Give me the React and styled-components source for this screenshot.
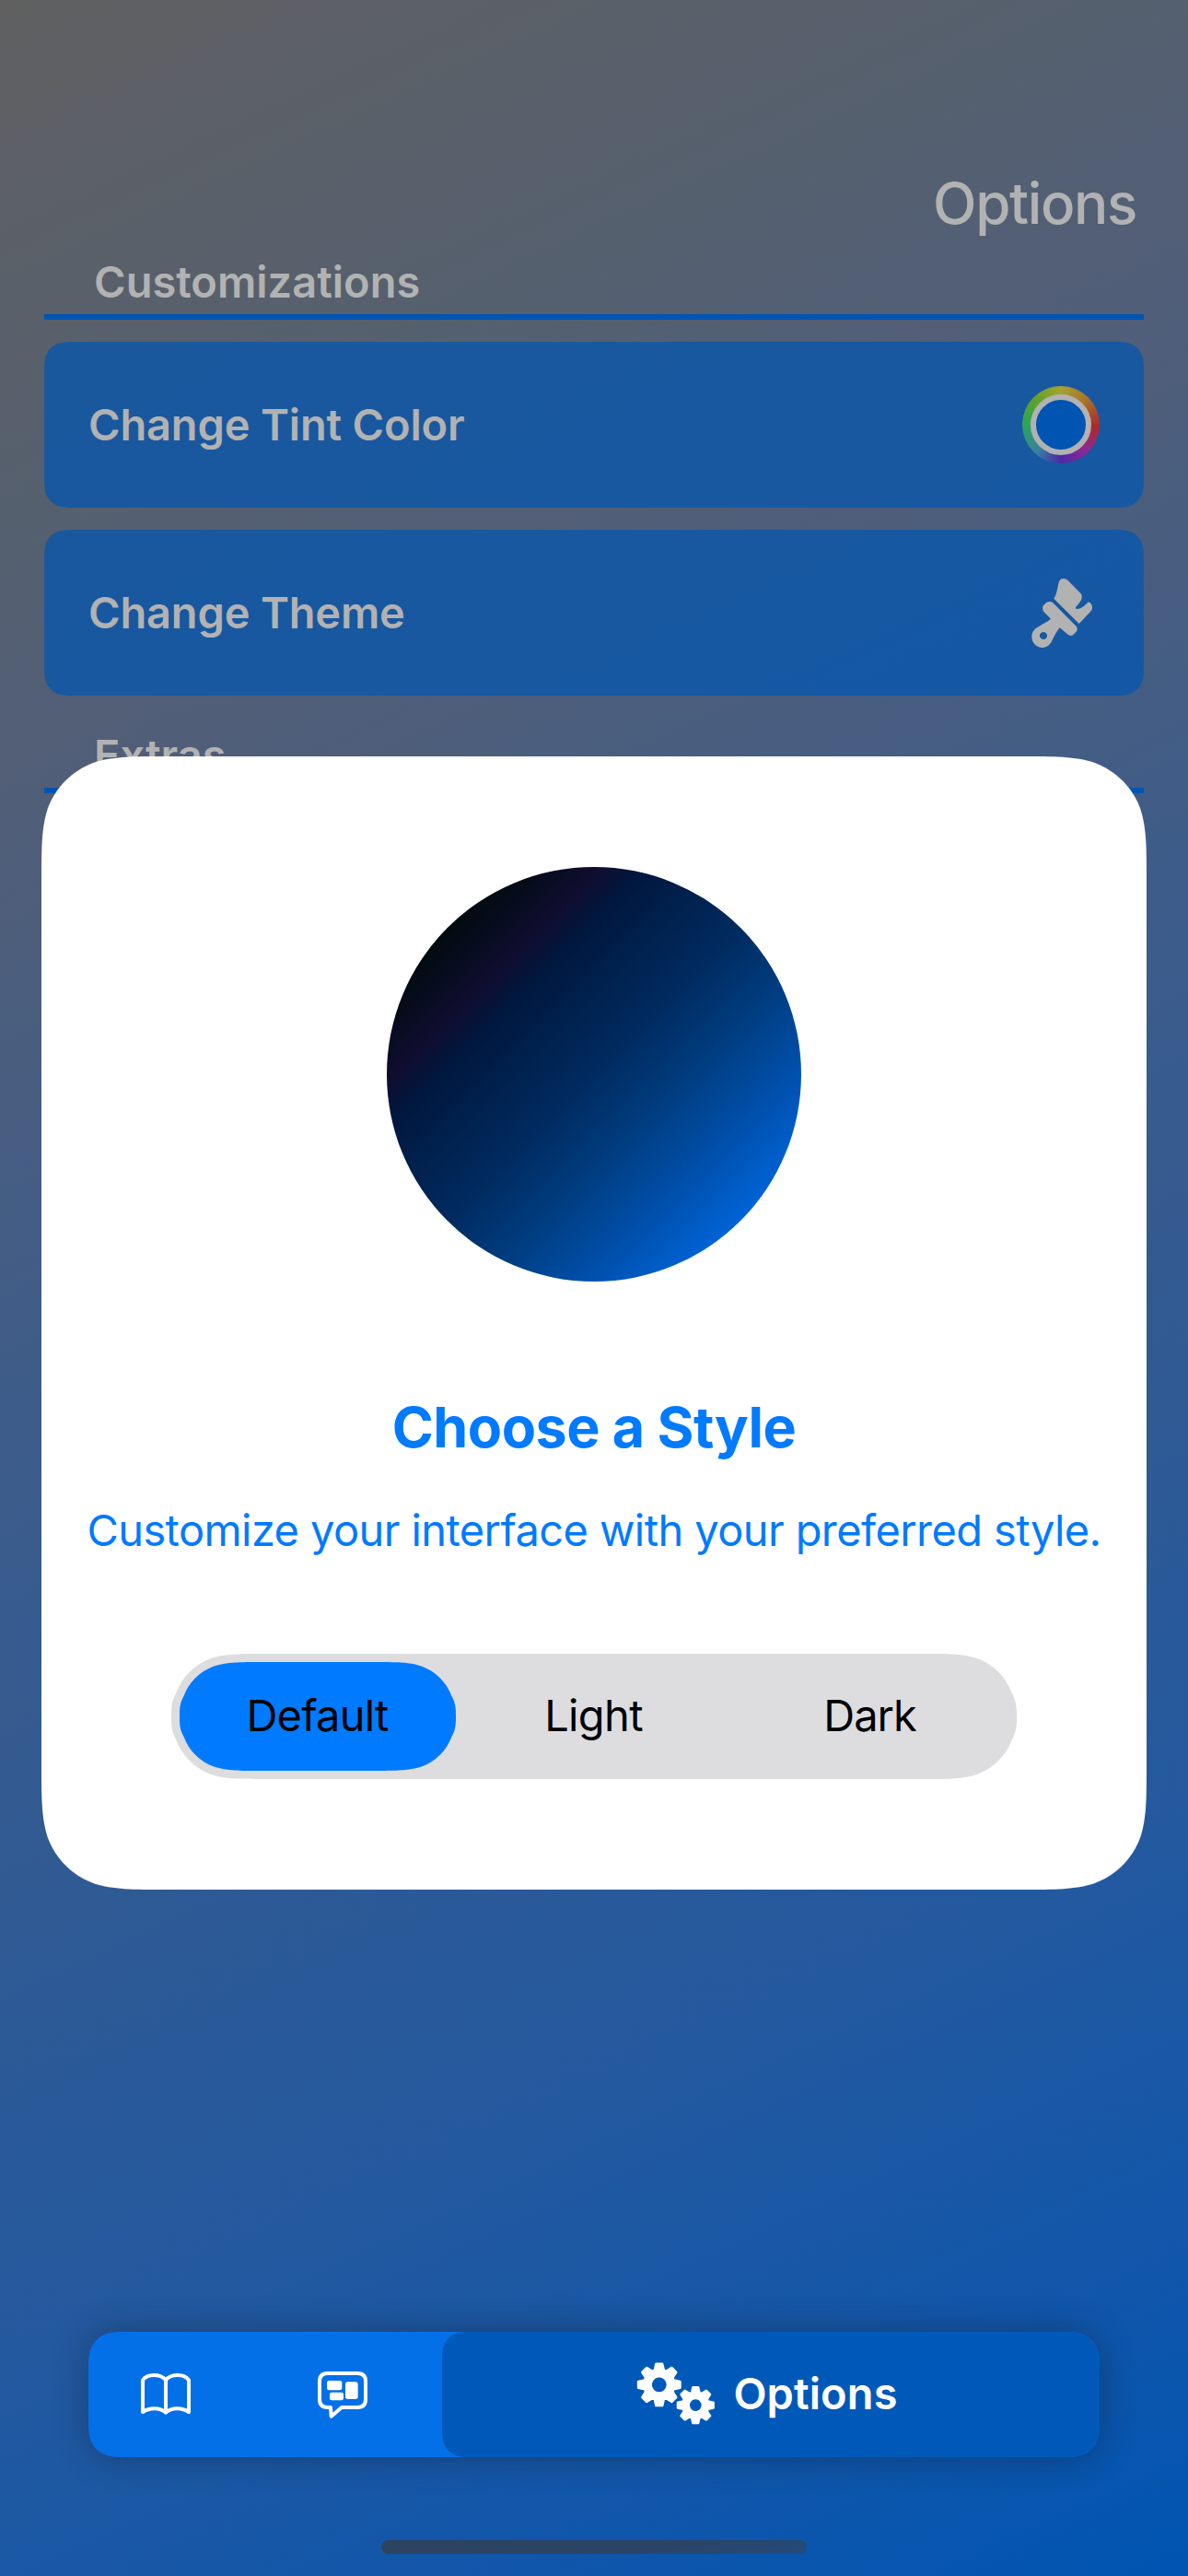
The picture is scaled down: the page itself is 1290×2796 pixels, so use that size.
import React, { useState } from "react";
import styled, { createGlobalStyle, css } from "styled-components";

/* Rounded rectangle with continuous-curvature corners, as a clip path. */
const smoothRect = (w, h, r) => {
  const ex = Math.min(1.528665 * r, w / 2);
  const ey = Math.min(1.528665 * r, h / 2);
  const limited = ey < 1.528665 * r;
  const c1 = limited ? 0.76 * r : 0.868407 * r;
  const c2 = limited ? 0.88 * r : 1.088493 * r;
  const corner = [
    [ex, 0],
    [1.088493 * r, 0], [0.868407 * r, 0], [0.631494 * r, 0.074911 * r],
    [0.372824 * r, 0.169059 * r], [0.16906 * r, 0.372824 * r], [0.074912 * r, 0.631494 * r],
    [0, c1], [0, c2], [0, ey],
  ];
  const place = (pts, fx, fy) =>
    pts.map(([x, y]) => `${(fx ? w - x : x).toFixed(2)} ${(fy ? h - y : y).toFixed(2)}`);
  const seg = (p) =>
    `L${p[0]}C${p[1]} ${p[2]} ${p[3]}C${p[4]} ${p[5]} ${p[6]}C${p[7]} ${p[8]} ${p[9]}`;
  const tr = place(corner, true, false);
  const br = place([...corner].reverse(), true, true);
  const bl = place(corner, false, true);
  const tl = place([...corner].reverse(), false, false);
  return `path("M${tr[0]}${seg(tr)}${seg(br)}${seg(bl)}${seg(tl)}Z")`;
};

const smooth = (w, h, r) => css`
  width: ${w}px;
  height: ${h}px;
  clip-path: ${smoothRect(w, h, r)};
`;

const colors = {
  tint: "#007aff",
  tintDimmed: "#0055b2",
  textDimmed: "#b2b2b2",
};

const GlobalStyle = createGlobalStyle`
  body {
    margin: 0;
    background: #0055b2;
    font-family: Inter, "Liberation Sans", sans-serif;
  }
  *, *::before, *::after { box-sizing: border-box; }
  button { border: 0; padding: 0; background: none; font: inherit; color: inherit; }
`;

const Screen = styled.div`
  position: relative;
  display: flex;
  flex-direction: column;
  width: 1290px;
  height: 2796px;
  overflow: hidden;
  background: linear-gradient(
    155.23deg,
    #606060 0%,
    #5d6066 5%,
    #55606f 17%,
    #515e78 26%,
    #4b5e7d 32%,
    #3d5c8a 46%,
    #305a93 61%,
    #2259a0 77%,
    #1056ab 90%,
    #0055b2 100%
  );
`;

const Page = styled.main`
  flex: 1;
  display: flex;
  flex-direction: column;
  padding: 181px 48px 0;
  color: ${colors.textDimmed};
`;

const PageTitle = styled.h1`
  margin: 0 8px 15px 0;
  height: 80px;
  font-size: 62px;
  font-weight: 500;
  line-height: 80px;
  letter-spacing: -1.39px;
  text-align: right;
`;

const Section = styled.section`
  display: flex;
  flex-direction: column;
  gap: 24px;
  margin-bottom: 35px;
`;

const SectionTitle = styled.h2`
  margin: 0;
  padding: 0 54px 5px;
  border-bottom: 6px solid ${colors.tintDimmed};
  font-size: 47px;
  font-weight: 600;
  line-height: 60px;
`;

const OptionRow = styled.button`
  ${smooth(1194, 180, 24)}
  display: flex;
  align-items: center;
  justify-content: space-between;
  padding: 0 48px;
  background: rgba(0, 86, 178, 0.7);
  font-size: 47px;
  font-weight: 600;
  line-height: 60px;
  letter-spacing: -0.18px;
`;

const ColorWell = styled.span`
  display: grid;
  place-items: center;
  width: 84px;
  height: 84px;
  border-radius: 50%;
  background: conic-gradient(
    #a4a32e 0deg,
    #a98a2b 22deg,
    #a9722a 45deg,
    #ac2a2a 92deg,
    #8e2a92 135deg,
    #4a2aa6 180deg,
    #3a80a0 222deg,
    #2aa45e 268deg,
    #5ca22a 312deg,
    #a4a32e 360deg
  );

  &::before {
    content: "";
    width: 66px;
    height: 66px;
    border: 6px solid ${colors.textDimmed};
    border-radius: 50%;
    background: ${colors.tintDimmed};
  }
`;

const RowIcon = styled.svg`
  width: 84px;
  height: 84px;
  fill: currentColor;
`;

const ModalLayer = styled.div`
  position: absolute;
  inset: 0;
  display: flex;
  align-items: flex-start;
  justify-content: center;
  padding-top: 821px;
`;

const Modal = styled.div`
  ${smooth(1200, 1230, 90)}
  display: flex;
  flex-direction: column;
  align-items: center;
  padding-top: 120px;
  background: #fff;
  color: ${colors.tint};
`;

const Preview = styled.div`
  width: 450px;
  height: 450px;
  border-radius: 50%;
  background: linear-gradient(
    135deg,
    #000a08 12%,
    #020b10 15%,
    #0f0d30 26%,
    #00183f 32%,
    #00224f 41%,
    #002b60 50%,
    #003a7b 60%,
    #004ea8 73%,
    #0064d9 86%
  );
`;

const ModalTitle = styled.h2`
  margin: 118px 0 42px;
  font-size: 61px;
  font-weight: 700;
  line-height: 80px;
  letter-spacing: -0.55px;
`;

const ModalText = styled.p`
  margin: 0 0 104px;
  font-size: 47px;
  line-height: 60px;
  letter-spacing: -0.59px;
  white-space: nowrap;
`;

const Segments = styled.div`
  ${smooth(918, 136, 68)}
  display: flex;
  padding: 9px;
  background: #dddddf;
`;

const Segment = styled.button`
  ${smooth(300, 118, 59)}
  padding: 0 1px 2px 0;
  background: ${(p) => (p.$active ? colors.tint : "transparent")};
  color: #000;
  font-size: 47px;
  line-height: 60px;
  letter-spacing: ${(p) => p.$tracking}px;
`;

const TabBar = styled.nav`
  margin: 0 96px 90px;
  width: 1098px;
  height: 136px;
  border-radius: 34px;
  box-shadow: 0 0 36px rgba(20, 30, 50, 0.45);
`;

const TabBarInner = styled.div`
  ${smooth(1098, 136, 30)}
  display: flex;
  background: #0470e8;
  color: #fff;
`;

const Tab = styled.button`
  display: flex;
  align-items: center;
  justify-content: center;
  width: ${(p) => p.$width}px;
`;

const ActiveTab = styled.button`
  ${smooth(714, 136, 24)}
  display: flex;
  align-items: center;
  justify-content: center;
  gap: 19px;
  padding-right: 8px;
  background: #0059b9;
`;

const TabLabel = styled.span`
  padding-bottom: 2px;
  font-size: 47px;
  font-weight: 600;
  line-height: 60px;
  letter-spacing: 0.1px;
`;

const TabIcon = styled.svg`
  width: 60px;
  height: 60px;
  fill: none;
  stroke: #fff;
  stroke-width: 12;
  stroke-linejoin: round;
  stroke-linecap: round;
`;

const GearsIcon = styled.svg`
  width: 86px;
  height: 74px;
  fill: #fff;
  stroke: #fff;
  stroke-width: 2.4;
  stroke-linejoin: round;
`;

const HomeIndicator = styled.div`
  align-self: center;
  width: 462px;
  height: 15px;
  margin-bottom: 24px;
  border-radius: 8px;
  background: linear-gradient(170deg, #2c4360, #2b4365 60%, #234b7e);
`;

const Brush = () => (
  <RowIcon viewBox="150 699 252 252">
    <path d="M253 779C262 766 264 750 268 730Q271 714 285 714Q293 714 299 720L341 763Q346 768 344 777C342 787 335 796 324 807Q322 813 328 813C344 811 354 802 364 791Q368 789 371 793L376 799Q381 811 374 820L335 861Z" />
    <path
      fillRule="evenodd"
      d="M219 801L229 792Q240 785 250 793L326 869Q333 877 326 887L317 896Q307 904 297 895L272 874C260 888 253 906 246 918A34 35 0 1 1 203 871C214 862 231 856 243 845L220 822Q213 811 219 801ZM219 888a12 12 0 1 0 .1 0Z"
    />
  </RowIcon>
);

const Book = () => (
  <TabIcon viewBox="240 207 180 180">
    <path d="M330 356V249C311 229 270 229 255 250V354C275 340 310 337 330 356C350 337 385 340 405 354V250C390 229 349 229 330 249" />
  </TabIcon>
);

const ChatBlocks = () => (
  <TabIcon viewBox="816 207 180 180">
    <path d="M857 228H955Q981 228 981 254V313Q981 339 955 339H903L869 368L867 339H857Q831 339 831 313V254Q831 228 857 228Z" />
    <g fill="#fff" stroke="none">
      <rect x="855" y="252" width="49" height="31" rx="7" />
      <rect x="864" y="290" width="45" height="26" rx="7" />
      <rect x="915" y="256" width="41" height="56" rx="8" />
    </g>
  </TabIcon>
);

/* Eight-toothed gear with a round hole. */
const gear = (cx, cy, r, hole) => {
  const root = r * 0.72;
  const pts = [];
  for (let i = 0; i < 8; i++) {
    const a = (i * Math.PI) / 4;
    const at = (radius, d) =>
      `${(cx + radius * Math.sin(a + d)).toFixed(2)} ${(cy - radius * Math.cos(a + d)).toFixed(2)}`;
    pts.push(at(root, -0.31), at(r, -0.15), at(r, 0.15), at(root, 0.31));
  }
  return `M${pts.join("L")}ZM${cx} ${cy - hole}a${hole} ${hole} 0 1 0 .01 0Z`;
};

const Gears = () => (
  <GearsIcon viewBox="0 0 86 74">
    <path fillRule="evenodd" d={gear(24.8, 26.4, 23, 9)} />
    <path fillRule="evenodd" d={gear(64.3, 48.6, 19.6, 7.5)} />
  </GearsIcon>
);

const styles = [
  { name: "Default", tracking: -0.77 },
  { name: "Light", tracking: -0.64 },
  { name: "Dark", tracking: -1 },
];

export default function App() {
  const [style, setStyle] = useState("Default");

  return (
    <>
      <GlobalStyle />
      <Screen>
        <Page>
          <PageTitle>Options</PageTitle>
          <Section>
            <SectionTitle>Customizations</SectionTitle>
            <OptionRow>
              Change Tint Color
              <ColorWell />
            </OptionRow>
            <OptionRow>
              Change Theme
              <Brush />
            </OptionRow>
          </Section>
          <Section>
            <SectionTitle>Extras</SectionTitle>
          </Section>
        </Page>

        <ModalLayer>
          <Modal role="dialog">
            <Preview />
            <ModalTitle>Choose a Style</ModalTitle>
            <ModalText>Customize your interface with your preferred style.</ModalText>
            <Segments>
              {styles.map(({ name, tracking }) => (
                <Segment
                  key={name}
                  $active={name === style}
                  $tracking={tracking}
                  onClick={() => setStyle(name)}
                >
                  {name}
                </Segment>
              ))}
            </Segments>
          </Modal>
        </ModalLayer>

        <TabBar>
          <TabBarInner>
            <Tab $width={168}>
              <Book />
            </Tab>
            <Tab $width={216}>
              <ChatBlocks />
            </Tab>
            <ActiveTab>
              <Gears />
              <TabLabel>Options</TabLabel>
            </ActiveTab>
          </TabBarInner>
        </TabBar>
        <HomeIndicator />
      </Screen>
    </>
  );
}
